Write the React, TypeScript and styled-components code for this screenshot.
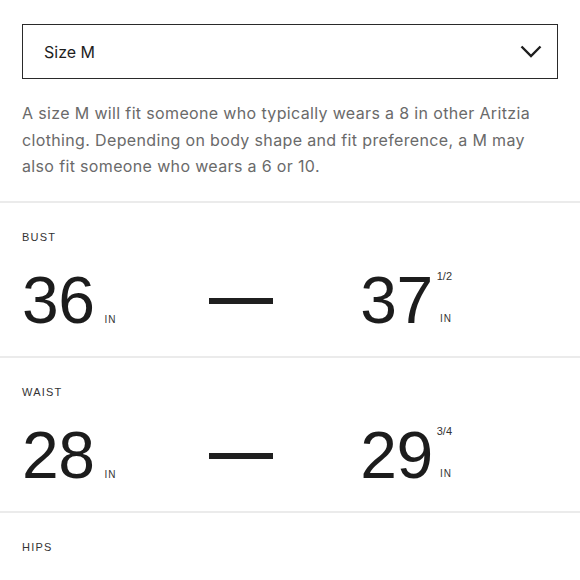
import React from "react";
import styled, { createGlobalStyle } from "styled-components";

const GlobalStyle = createGlobalStyle`
  html, body {
    margin: 0;
    padding: 0;
    background: #ffffff;
  }
  body {
    font-family: "Inter", "Liberation Sans", sans-serif;
    color: #222222;
  }
`;

const Page = styled.div`
  width: 580px;
  padding-top: 24px;
`;

const Intro = styled.div`
  padding: 0 22px 21px 22px;
`;

const SelectBox = styled.div`
  box-sizing: border-box;
  height: 55px;
  border: 1.5px solid #2a2a2a;
  display: flex;
  align-items: center;
  justify-content: space-between;
  padding: 0 15px 0 21px;
  font-size: 16px;
  color: #1e1e1e;
`;

const Description = styled.p`
  margin: 21px 0 0 0;
  font-size: 16px;
  line-height: 26.5px;
  letter-spacing: 0.35px;
  color: #6a6a6a;
`;

const Section = styled.section`
  border-top: 2px solid #ebebeb;
  padding: 27px 22px 23px 22px;
`;

const Label = styled.div`
  font-family: "Liberation Sans", Arial, sans-serif;
  font-size: 11px;
  line-height: 14px;
  letter-spacing: 1.2px;
  color: #333333;
`;

const Row = styled.div`
  margin-top: 23px;
  width: 430px;
  display: grid;
  grid-template-columns: 187px 64px 1fr;
  align-items: center;
`;

const Group = styled.div<{ $end?: boolean }>`
  display: flex;
  justify-self: ${(p) => (p.$end ? "end" : "start")};
  align-items: ${(p) => (p.$end ? "stretch" : "baseline")};
  gap: ${(p) => (p.$end ? "4px" : "10px")};
`;

const Num = styled.span`
  font-family: "Liberation Sans", Arial, sans-serif;
  font-size: 66px;
  line-height: 66px;
  color: #1c1c1c;
  letter-spacing: -0.5px;
`;

const Unit = styled.span`
  font-family: "Liberation Sans", Arial, sans-serif;
  font-size: 10px;
  line-height: 12px;
  letter-spacing: 1px;
  color: #333333;
`;

const Side = styled.div`
  display: flex;
  flex-direction: column;
  justify-content: space-between;
  align-items: flex-end;
  padding: 3px 0 8px 0;
`;

const Fraction = styled.span`
  font-family: "Liberation Sans", Arial, sans-serif;
  font-size: 11px;
  line-height: 12px;
  color: #333333;
`;

const Dash = styled.div`
  height: 6px;
  background: #1f1f1f;
  margin-top: 2px;
`;

const Chevron = () => (
  <svg width="22" height="13" viewBox="0 0 22 13" fill="none">
    <path d="M1.5 1.5 L11 11 L20.5 1.5" stroke="#1e1e1e" strokeWidth="2.4" />
  </svg>
);

type Measure = {
  label: string;
  from?: string;
  fromFrac?: string;
  to?: string;
  toFrac?: string;
};

const measures: Measure[] = [
  { label: "BUST", from: "36", to: "37", toFrac: "1/2" },
  { label: "WAIST", from: "28", to: "29", toFrac: "3/4" },
  { label: "HIPS" },
];

const Value = ({ n, frac, end }: { n: string; frac?: string; end?: boolean }) =>
  frac ? (
    <Group $end>
      <Num>{n}</Num>
      <Side>
        <Fraction>{frac}</Fraction>
        <Unit>IN</Unit>
      </Side>
    </Group>
  ) : (
    <Group $end={end}>
      <Num>{n}</Num>
      <Unit>IN</Unit>
    </Group>
  );

const App = () => {
  return (
    <Page>
      <GlobalStyle />
      <Intro>
        <SelectBox>
          <span>Size M</span>
          <Chevron />
        </SelectBox>
        <Description>
          A size M will fit someone who typically wears a 8 in other Aritzia
          clothing. Depending on body shape and fit preference, a M may also
          fit someone who wears a 6 or 10.
        </Description>
      </Intro>
      {measures.map((m) => (
        <Section key={m.label}>
          <Label>{m.label}</Label>
          {m.from && m.to && (
            <Row>
              <Value n={m.from} frac={m.fromFrac} />
              <Dash />
              <Value n={m.to} frac={m.toFrac} end />
            </Row>
          )}
        </Section>
      ))}
    </Page>
  );
};

export default App;
